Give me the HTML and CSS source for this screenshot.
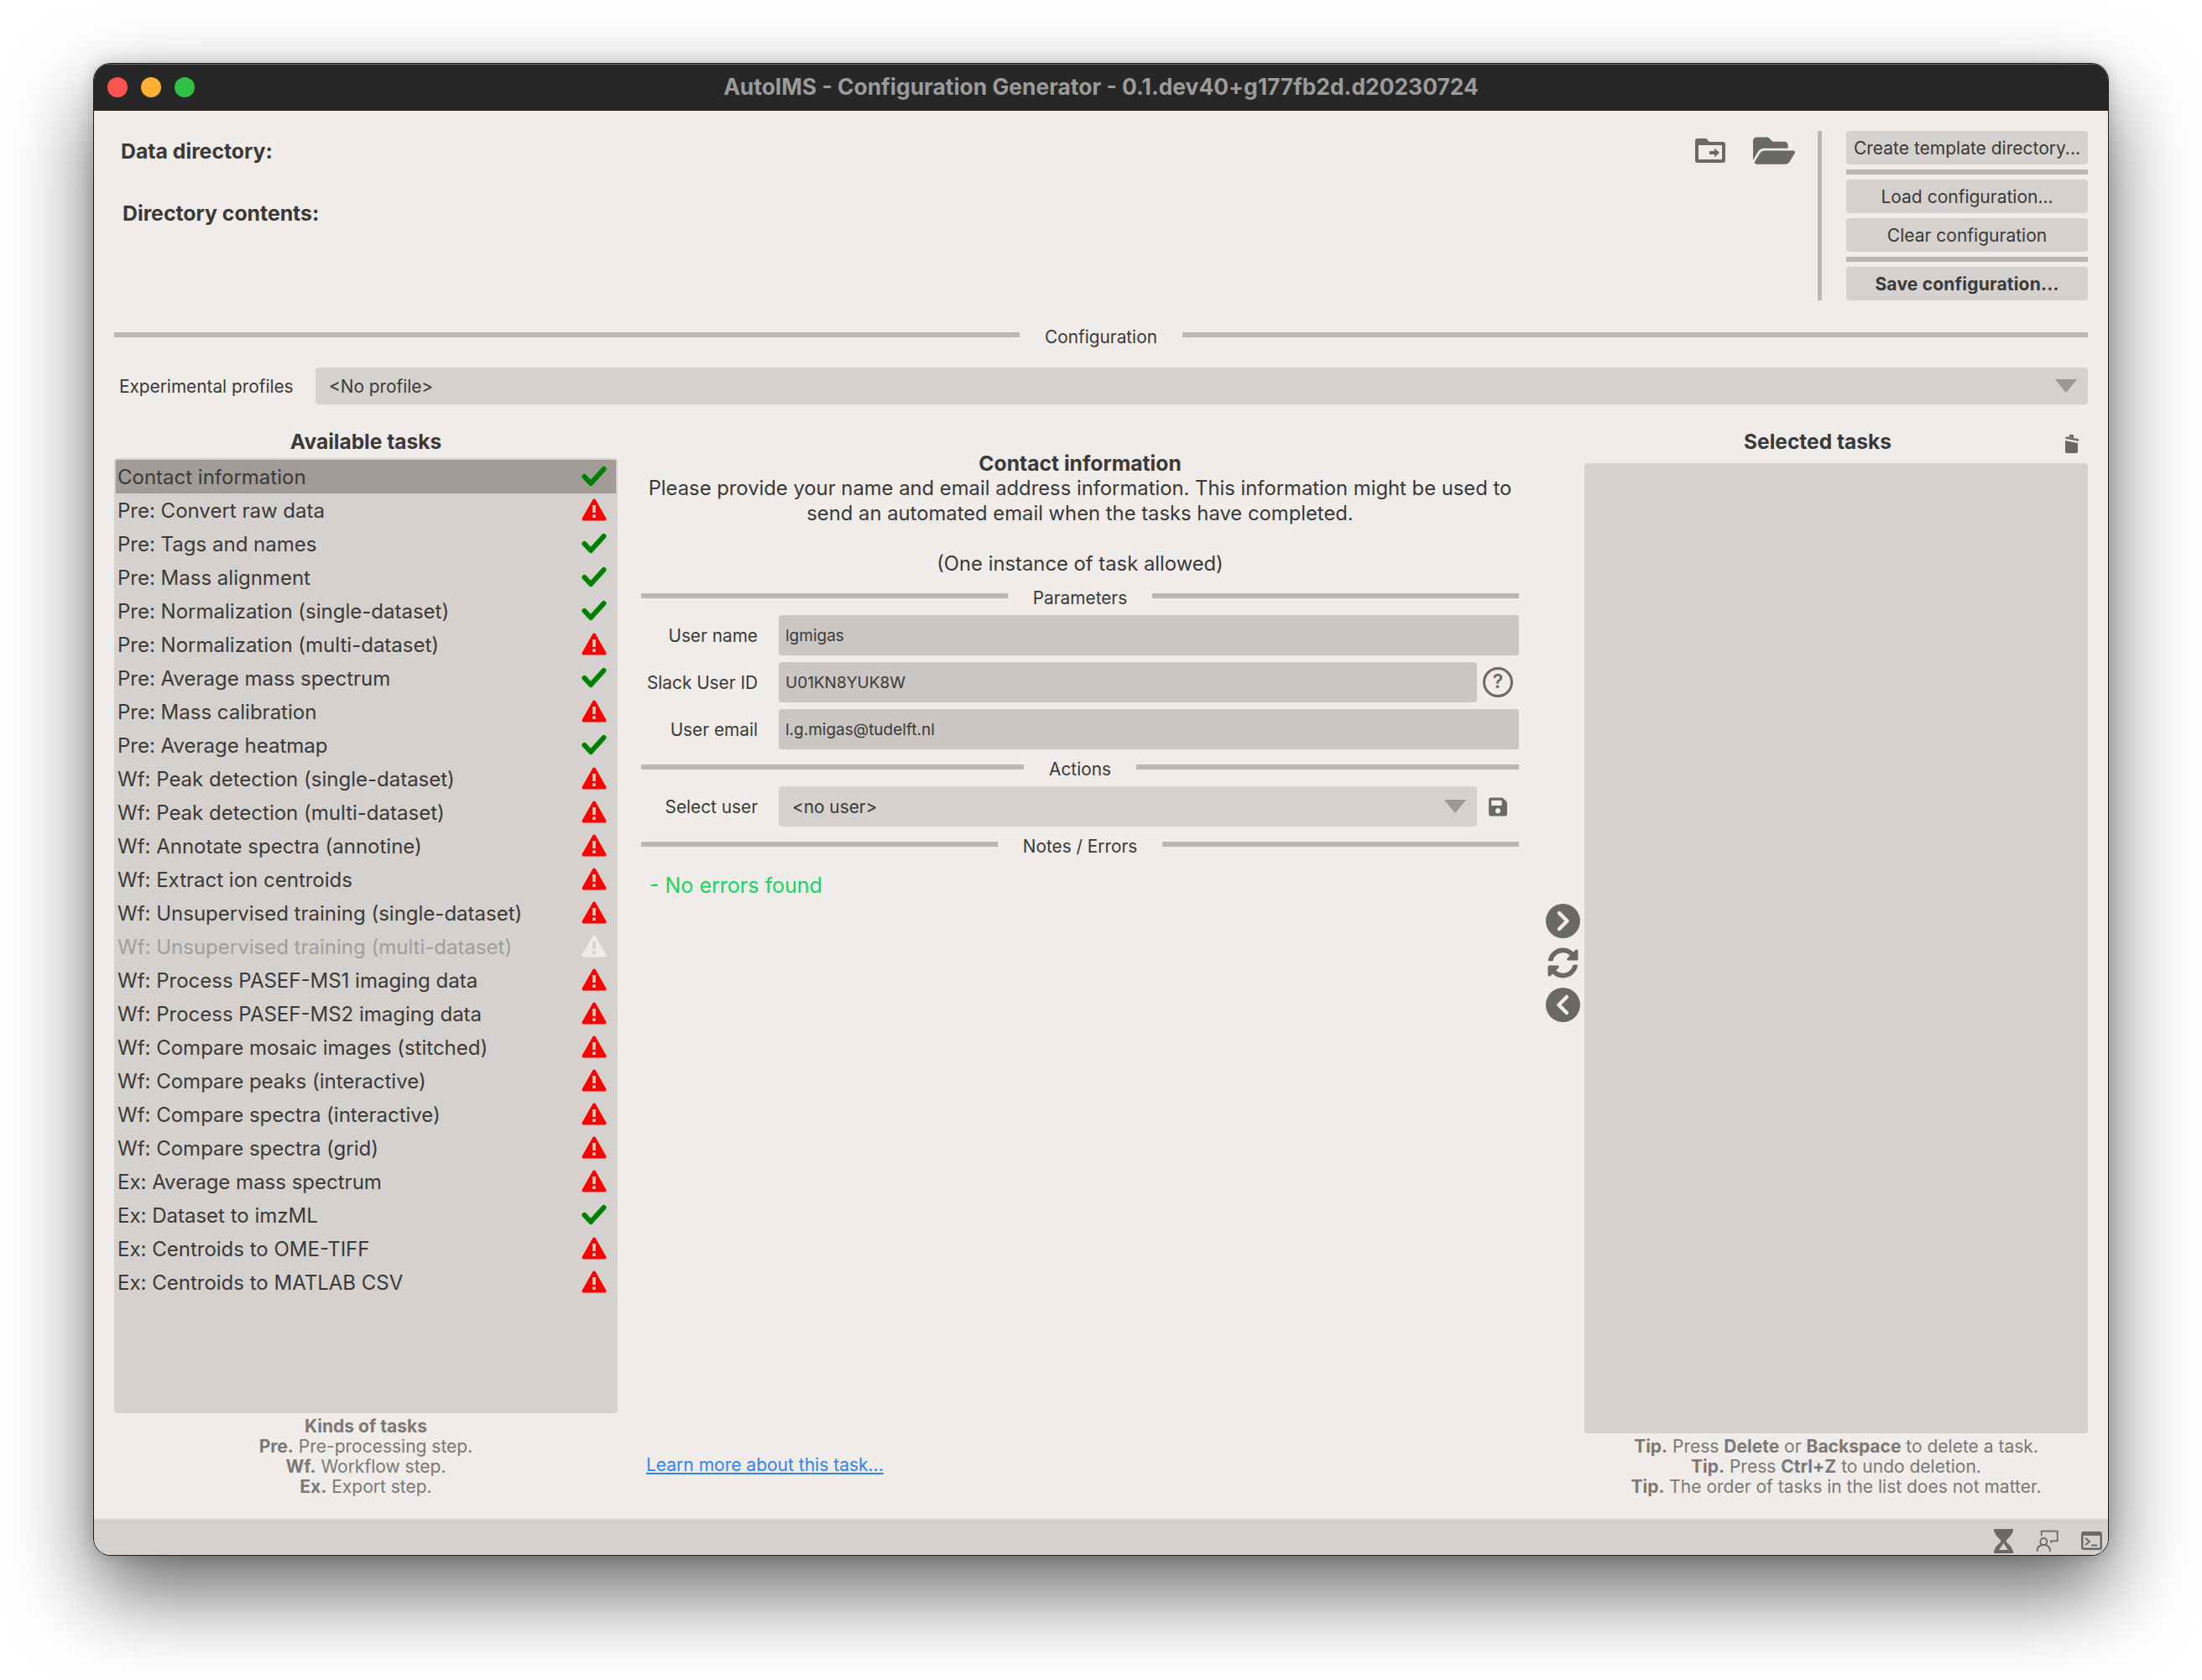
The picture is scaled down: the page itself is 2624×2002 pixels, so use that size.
FILE: index.html
```html
<!DOCTYPE html>
<html lang="en">

<head>
    <meta charset="UTF-8">
    <title>AutoIMS - Configuration Generator</title>
    <link rel="stylesheet" href="styles.css">
</head>

<body>
    <!-- shared icons -->
    <svg class="defs" width="0" height="0">
        <symbol id="ok" viewBox="0 0 30 26">
            <path d="M3.5 13.5 L11 21.5 L26.5 4.5" fill="none" stroke="#008000" stroke-width="6" stroke-linecap="round" stroke-linejoin="round" />
        </symbol>
        <symbol id="warn" viewBox="0 0 30 27">
            <path d="M15 2.5 L27.5 24.5 H2.5 Z" fill="#f00" stroke="#f00" stroke-width="4" stroke-linejoin="round" />
            <path d="M13.2 8 h3.6 v9 h-3.6 Z M13.2 19.5 h3.6 v3.6 h-3.6 Z" fill="#d5d1ce" />
        </symbol>
        <symbol id="warn-off" viewBox="0 0 30 27">
            <path d="M15 2.5 L27.5 24.5 H2.5 Z" fill="#eeebe9" stroke="#eeebe9" stroke-width="4" stroke-linejoin="round" />
            <path d="M13.2 8 h3.6 v9 h-3.6 Z M13.2 19.5 h3.6 v3.6 h-3.6 Z" fill="#d5d1ce" />
        </symbol>
    </svg>

    <div class="window">
        <div class="titlebar">
            <div class="lights">
                <span class="light red"></span>
                <span class="light orange"></span>
                <span class="light green"></span>
            </div>
            <div class="title">AutoIMS - Configuration Generator - 0.1.dev40+g177fb2d.d20230724</div>
        </div>

        <div class="content">
            <div class="top">
                <div class="info">
                    <div class="info-data">Data directory:</div>
                    <div class="info-contents">Directory contents:</div>
                </div>
                <div class="top-icons">
                    <svg class="ico-folder-go" viewBox="0 0 36 29">
                        <path fill-rule="evenodd" d="M3 0 h10 l4 4 h16 a3 3 0 0 1 3 3 v19 a3 3 0 0 1-3 3 H3 a3 3 0 0 1-3-3 V3 a3 3 0 0 1 3-3z M4 8 v17 h28 V8z" />
                        <path d="M17 15 h6 v-3.500 l6 5.500 -6 5.500 v-3.500 h-6z" />
                    </svg>
                    <svg class="ico-folder-open" viewBox="0 0 576 512" preserveAspectRatio="none">
                        <path d="M572.694 292.093L500.27 416.248A63.997 63.997 0 0 1 444.989 448H45.025c-18.523 0-30.064-20.093-20.731-36.093l72.424-124.155A64 64 0 0 1 152 256h399.964c18.523 0 30.064 20.093 20.73 36.093zM152 224h328v-48c0-26.51-21.49-48-48-48H272l-64-64H48C21.49 64 0 85.49 0 112v278.046l69.077-118.418C86.214 242.25 117.989 224 152 224z" />
                    </svg>
                </div>
                <div class="vline"></div>
                <div class="buttons">
                    <div class="btn">Create template directory...</div>
                    <div class="hline"></div>
                    <div class="btn">Load configuration...</div>
                    <div class="btn">Clear configuration</div>
                    <div class="hline"></div>
                    <div class="btn btn-bold">Save configuration...</div>
                </div>
            </div>

            <div class="divider config-divider"><i></i><span>Configuration</span><i></i></div>

            <div class="profiles">
                <label>Experimental profiles</label>
                <div class="combo">&lt;No profile&gt;<b class="arrow"></b></div>
            </div>

            <div class="columns">
                <div class="col">
                    <div class="col-title">Available tasks</div>
                    <div class="tasks">
                        <div class="task selected"><span>Contact information</span><svg class="flag"><use href="#ok" /></svg></div>
                        <div class="task"><span>Pre: Convert raw data</span><svg class="flag"><use href="#warn" /></svg></div>
                        <div class="task"><span>Pre: Tags and names</span><svg class="flag"><use href="#ok" /></svg></div>
                        <div class="task"><span>Pre: Mass alignment</span><svg class="flag"><use href="#ok" /></svg></div>
                        <div class="task"><span>Pre: Normalization (single-dataset)</span><svg class="flag"><use href="#ok" /></svg></div>
                        <div class="task"><span>Pre: Normalization (multi-dataset)</span><svg class="flag"><use href="#warn" /></svg></div>
                        <div class="task"><span>Pre: Average mass spectrum</span><svg class="flag"><use href="#ok" /></svg></div>
                        <div class="task"><span>Pre: Mass calibration</span><svg class="flag"><use href="#warn" /></svg></div>
                        <div class="task"><span>Pre: Average heatmap</span><svg class="flag"><use href="#ok" /></svg></div>
                        <div class="task"><span>Wf: Peak detection (single-dataset)</span><svg class="flag"><use href="#warn" /></svg></div>
                        <div class="task"><span>Wf: Peak detection (multi-dataset)</span><svg class="flag"><use href="#warn" /></svg></div>
                        <div class="task"><span>Wf: Annotate spectra (annotine)</span><svg class="flag"><use href="#warn" /></svg></div>
                        <div class="task"><span>Wf: Extract ion centroids</span><svg class="flag"><use href="#warn" /></svg></div>
                        <div class="task"><span>Wf: Unsupervised training (single-dataset)</span><svg class="flag"><use href="#warn" /></svg></div>
                        <div class="task disabled"><span>Wf: Unsupervised training (multi-dataset)</span><svg class="flag"><use href="#warn-off" /></svg></div>
                        <div class="task"><span>Wf: Process PASEF-MS1 imaging data</span><svg class="flag"><use href="#warn" /></svg></div>
                        <div class="task"><span>Wf: Process PASEF-MS2 imaging data</span><svg class="flag"><use href="#warn" /></svg></div>
                        <div class="task"><span>Wf: Compare mosaic images (stitched)</span><svg class="flag"><use href="#warn" /></svg></div>
                        <div class="task"><span>Wf: Compare peaks (interactive)</span><svg class="flag"><use href="#warn" /></svg></div>
                        <div class="task"><span>Wf: Compare spectra (interactive)</span><svg class="flag"><use href="#warn" /></svg></div>
                        <div class="task"><span>Wf: Compare spectra (grid)</span><svg class="flag"><use href="#warn" /></svg></div>
                        <div class="task"><span>Ex: Average mass spectrum</span><svg class="flag"><use href="#warn" /></svg></div>
                        <div class="task"><span>Ex: Dataset to imzML</span><svg class="flag"><use href="#ok" /></svg></div>
                        <div class="task"><span>Ex: Centroids to OME-TIFF</span><svg class="flag"><use href="#warn" /></svg></div>
                        <div class="task"><span>Ex: Centroids to MATLAB CSV</span><svg class="flag"><use href="#warn" /></svg></div>
                    </div>
                    <div class="hints">
                        <div><b>Kinds of tasks</b></div>
                        <div><b>Pre.</b> Pre-processing step.</div>
                        <div><b>Wf.</b> Workflow step.</div>
                        <div><b>Ex.</b> Export step.</div>
                    </div>
                </div>

                <div class="col middle">
                    <div class="desc">
                        <div class="desc-title">Contact information</div>
                        <div>Please provide your name and email address information. This information might be used to</div>
                        <div>send an automated email when the tasks have completed.</div>
                        <div>&nbsp;</div>
                        <div>(One instance of task allowed)</div>
                    </div>

                    <div class="divider"><i></i><span>Parameters</span><i></i></div>
                    <div class="form">
                        <label>User name</label>
                        <div class="field wide">lgmigas</div>
                        <label>Slack User ID</label>
                        <div class="field">U01KN8YUK8W</div>
                        <div class="slot"><span class="help">?</span></div>
                        <label>User email</label>
                        <div class="field wide">l.g.migas@tudelft.nl</div>
                    </div>

                    <div class="divider"><i></i><span>Actions</span><i></i></div>
                    <div class="form">
                        <label>Select user</label>
                        <div class="combo small">&lt;no user&gt;<b class="arrow"></b></div>
                        <div class="slot">
                            <svg class="ico-save" viewBox="0 0 448 512">
                                <path d="M433.941 129.941l-83.882-83.882A48 48 0 0 0 316.118 32H48C21.49 32 0 53.49 0 80v352c0 26.51 21.49 48 48 48h352c26.51 0 48-21.49 48-48V163.882a48 48 0 0 0-14.059-33.941zM224 416c-35.346 0-64-28.654-64-64 0-35.346 28.654-64 64-64s64 28.654 64 64c0 35.346-28.654 64-64 64zm96-304.52V212c0 6.627-5.373 12-12 12H76c-6.627 0-12-5.373-12-12V108c0-6.627 5.373-12 12-12h228.52c3.183 0 6.235 1.264 8.485 3.515l3.48 3.48A11.996 11.996 0 0 1 320 111.48z" />
                            </svg>
                        </div>
                    </div>

                    <div class="divider"><i></i><span>Notes / Errors</span><i></i></div>
                    <div class="no-errors">- No errors found</div>
                    <a class="learn" href="#">Learn more about this task...</a>
                </div>

                <div class="transfer">
                    <svg class="ico-round" viewBox="0 0 41 41">
                        <circle cx="20.500" cy="20.500" r="20.500" />
                        <path d="M16 11 L25.500 20.500 L16 30" fill="none" stroke="#efecea" stroke-width="4.500" stroke-linecap="round" stroke-linejoin="round" />
                    </svg>
                    <svg class="ico-sync" viewBox="0 0 512 512" preserveAspectRatio="none">
                        <path d="M370.72 133.28C339.458 104.008 298.888 87.962 255.848 88c-77.458.068-144.328 53.178-162.791 126.85-1.344 5.363-6.122 9.15-11.651 9.15H24.103c-7.498 0-13.194-6.807-11.807-14.176C33.933 94.924 134.813 8 256 8c66.448 0 126.791 26.136 171.315 68.685L463.03 40.97C478.149 25.851 504 36.559 504 57.941V192c0 13.255-10.745 24-24 24H345.941c-21.382 0-32.09-25.851-16.971-40.971l41.75-41.749zM32 296h134.059c21.382 0 32.09 25.851 16.971 40.971l-41.75 41.75c31.262 29.273 71.835 45.319 114.876 45.28 77.418-.07 144.315-53.144 162.787-126.849 1.344-5.363 6.122-9.15 11.651-9.15h57.304c7.498 0 13.194 6.807 11.807 14.176C478.067 417.076 377.187 504 256 504c-66.448 0-126.791-26.136-171.315-68.685L48.97 471.03C33.851 486.149 8 475.441 8 454.059V320c0-13.255 10.745-24 24-24z" />
                    </svg>
                    <svg class="ico-round" viewBox="0 0 41 41">
                        <circle cx="20.500" cy="20.500" r="20.500" />
                        <path d="M25 11 L15.500 20.500 L25 30" fill="none" stroke="#efecea" stroke-width="4.500" stroke-linecap="round" stroke-linejoin="round" />
                    </svg>
                </div>

                <div class="col">
                    <div class="col-head">
                        <div class="col-title">Selected tasks</div>
                        <svg class="ico-trash" viewBox="0 0 18 23">
                            <path d="M1 8 L16 11 V21 a2 2 0 0 1-2 2 H3 a2 2 0 0 1-2-2z" />
                            <path d="M1.500 4.500 L17 7.500" fill="none" stroke="#6b6966" stroke-width="2.600" />
                            <path d="M5 3.500 L7 .5 L11 1.300 L11 5z" />
                        </svg>
                    </div>
                    <div class="selected-list"></div>
                    <div class="hints">
                        <div><b>Tip.</b> Press <b>Delete</b> or <b>Backspace</b> to delete a task.</div>
                        <div><b>Tip.</b> Press <b>Ctrl+Z</b> to undo deletion.</div>
                        <div><b>Tip.</b> The order of tasks in the list does not matter.</div>
                    </div>
                </div>
            </div>
        </div>

        <div class="statusbar">
            <svg class="ico-hourglass" viewBox="0 0 23 29">
                <path d="M0 0 h23 v3 l-1 1 c-1 5 -6 7 -7.500 10.500 c1.500 3.500 6.500 5 7.500 10.500 l1 1 v3 H0 v-3 l1 -1 c1 -5.500 6 -7 7.500 -10.500 c-1.500 -3.500 -6.500 -5.500 -7.500 -10.500 l-1 -1z" />
                <path d="M11.500 17 l5.500 8 h-11z" fill="#d5d1ce" />
            </svg>
            <svg class="ico-person" viewBox="0 0 27 26" fill="none" stroke="#6b6966" stroke-width="1.800">
                <path d="M6.700 7 V1.700 H25.700 V13.300 H20.500" />
                <path d="M16.500 12.500 h4.500 l-2.500 4z" fill="#6b6966" stroke="none" />
                <circle cx="9.300" cy="14" r="4" />
                <path d="M1.500 26 c0-5 3-8 7.800-8 s7.800 3 7.800 8" />
            </svg>
            <svg class="ico-terminal" viewBox="0 0 25 22">
                <path fill-rule="evenodd" d="M3 0 h19 a3 3 0 0 1 3 3 v16 a3 3 0 0 1-3 3 H3 a3 3 0 0 1-3-3 V3 a3 3 0 0 1 3-3z M2.500 5 v14.500 h20 V5z" />
                <path d="M5 8 L10 12 L5 16" fill="none" stroke="#6b6966" stroke-width="2" />
                <path d="M12 15.500 h7 v2 h-7z" />
            </svg>
        </div>
    </div>
</body>

</html>
```

FILE: styles.css
```css
html, body {
    margin: 0;
    background-color: #fff;
}

html {
    height: 2002px;
    overflow: hidden;
}

body {
    box-sizing: border-box;
    height: 2002px;
    padding: 76px 112px 0;
    overflow: hidden;
    font-family: Inter, "Liberation Sans", sans-serif;
    font-size: 24px;
    color: #3a3937;
}

.defs {
    position: absolute;
}

.window {
    display: flex;
    flex-direction: column;
    width: 2400px;
    height: 1777px;
    overflow: hidden;
    border-radius: 20px;
    background-color: #efecea;
    box-shadow: 0 0 0 1px #1c1c1c, 0 44px 100px rgba(0, 0, 0, 0.6), 0 0 20px rgba(0, 0, 0, 0.2);
}

/* title bar */
.titlebar {
    display: grid;
    grid-template-columns: 1fr auto 1fr;
    align-items: center;
    flex: none;
    height: 56px;
    background-color: #272727;
    box-shadow: inset 0 1px 0 #6a6a6a;
}

.lights {
    display: flex;
    gap: 16px;
    padding-left: 16px;
}

.light {
    width: 24px;
    height: 24px;
    border-radius: 50%;
}

.red { background-color: #ff5350; }
.orange { background-color: #ffb135; }
.green { background-color: #30c145; }

.title {
    margin-top: -2px;
    font-size: 26.400px;
    font-weight: 700;
    color: #9b9b9b;
}

/* main area */
.content {
    display: flex;
    flex-direction: column;
    flex: 1;
    min-height: 0;
    padding: 24px 24px 26px;
}

.top {
    display: flex;
    flex: none;
    height: 202px;
}

.info {
    flex: 1;
    font-size: 24.800px;
    font-weight: 700;
}

.info-data {
    padding: 9px 0 0 8px;
    line-height: 30px;
}

.info-contents {
    padding: 44px 0 0 10px;
    line-height: 30px;
}

.top-icons {
    display: flex;
    align-items: flex-start;
    gap: 33px;
    padding-top: 7px;
    fill: #6b6966;
}

.ico-folder-go {
    width: 36px;
    height: 29px;
    margin-top: 2px;
}

.ico-folder-open {
    width: 50px;
    height: 43px;
    margin-top: -5px;
}

.vline {
    width: 5px;
    margin: 0 29px 0 27px;
    background-color: #bbb6b2;
}

.buttons {
    display: flex;
    flex-direction: column;
    width: 288px;
    gap: 6px;
}

.btn {
    height: 40px;
    line-height: 42px;
    text-align: center;
    font-size: 21px;
    border-radius: 4px;
    background-color: #d5d1ce;
}

.btn-bold {
    font-weight: 700;
    letter-spacing: 0.200px;
}

.hline {
    height: 6px;
    background-color: #bbb6b2;
}

/* section line with a caption in the middle */
.divider {
    display: flex;
    align-items: center;
    height: 30px;
    font-size: 20.800px;
}

.divider i {
    flex: 1;
    height: 6px;
    background-color: #bbb6b2;
}

.divider span {
    padding: 4px 30px 0;
}

.config-divider {
    flex: none;
    margin-top: 26px;
}

.profiles {
    display: flex;
    align-items: center;
    flex: none;
    margin-top: 24px;
    font-size: 20.800px;
}

.profiles label {
    width: 240px;
    padding-left: 6px;
    box-sizing: border-box;
}

.combo {
    position: relative;
    flex: 1;
    height: 44px;
    padding-left: 16px;
    line-height: 45px;
    border-radius: 4px;
    background-color: #d5d1ce;
}

.arrow {
    position: absolute;
    top: 14px;
    right: 13px;
    border-left: 13px solid transparent;
    border-right: 13px solid transparent;
    border-top: 16px solid #9b9793;
}

/* three columns */
.columns {
    display: grid;
    grid-template-columns: 600px 1074px 78px 600px;
    flex: 1;
    min-height: 0;
    margin-top: 24px;
}

.col {
    display: flex;
    flex-direction: column;
    min-height: 0;
}

.col-title {
    height: 40px;
    line-height: 40px;
    text-align: center;
    font-size: 24.500px;
    font-weight: 700;
    flex: none;
}

.tasks {
    flex: 1;
    padding: 2px;
    border-radius: 4px;
    background-color: #d5d1ce;
}

.task {
    display: flex;
    align-items: center;
    justify-content: space-between;
    height: 40px;
    padding: 0 11px 0 2px;
    font-size: 24px;
}

.task.selected {
    background-color: #a19c98;
}

.task.disabled {
    color: #a09d9a;
}

.flag {
    width: 30px;
    height: 27px;
    margin-top: -2px;
}

.hints {
    flex: none;
    margin-top: 4px;
    font-size: 21px;
    line-height: 24px;
    text-align: center;
    color: #7a7876;
}

/* middle column */
.middle {
    margin-left: 28px;
}

.desc {
    padding-top: 31px;
    margin-bottom: 8px;
    line-height: 30px;
    font-size: 23.800px;
    text-align: center;
}

.desc-title {
    font-size: 24.700px;
    font-weight: 700;
}

.form {
    display: grid;
    grid-template-columns: 164px 1fr 50px;
    row-gap: 8px;
    align-items: center;
    margin: 8px 0 6px;
    font-size: 20.800px;
}

.form label {
    padding-right: 25px;
    text-align: right;
}

.field {
    height: 48px;
    padding-left: 8px;
    line-height: 50px;
    font-size: 19px;
    border-radius: 4px;
    background-color: #cac6c4;
}

.wide {
    grid-column: span 2;
}

.combo.small {
    height: 48px;
    line-height: 49px;
    font-size: 20.800px;
}

.combo.small .arrow {
    top: 16px;
}

.slot {
    display: flex;
    justify-content: center;
    align-items: center;
}

.help {
    box-sizing: border-box;
    width: 36px;
    height: 36px;
    border: 3.500px solid #6b6966;
    border-radius: 50%;
    line-height: 29px;
    text-align: center;
    font-size: 23px;
    font-weight: 600;
    color: #6b6966;
}

.ico-save {
    width: 22px;
    height: 25px;
    fill: #6b6966;
}

.no-errors {
    margin-top: 19px;
    padding-left: 10px;
    line-height: 30px;
    font-size: 25px;
    color: #17d65c;
}

.learn {
    margin: auto 0 24px 6px;
    align-self: flex-start;
    font-size: 21px;
    line-height: 28px;
    color: #2f82f8;
}

/* move task buttons */
.transfer {
    display: flex;
    flex-direction: column;
    align-items: center;
    justify-content: center;
    gap: 11px;
    padding: 5px 0 0 26px;
    fill: #6b6966;
}

.ico-round {
    width: 41px;
    height: 41px;
}

.ico-sync {
    width: 37px;
    height: 37px;
}

/* right column */
.col-head {
    display: flex;
    align-items: center;
    flex: none;
    margin-bottom: 6px;
}

.col-head .col-title {
    flex: 1;
}

.ico-trash {
    width: 18px;
    height: 23px;
    margin: 4px 10px 0 16px;
    fill: #6b6966;
}

.selected-list {
    flex: 1;
    border-radius: 4px;
    background-color: #d5d1ce;
}

/* bottom bar */
.statusbar {
    display: flex;
    align-items: center;
    justify-content: flex-end;
    flex: none;
    gap: 27px;
    height: 43px;
    box-sizing: border-box;
    padding: 9px 7px 0 0;
    fill: #6b6966;
    background-color: #d5d1ce;
}

.ico-hourglass {
    width: 23px;
    height: 29px;
}

.ico-person {
    width: 27px;
    height: 26px;
}

.ico-terminal {
    width: 25px;
    height: 22px;
}
```
